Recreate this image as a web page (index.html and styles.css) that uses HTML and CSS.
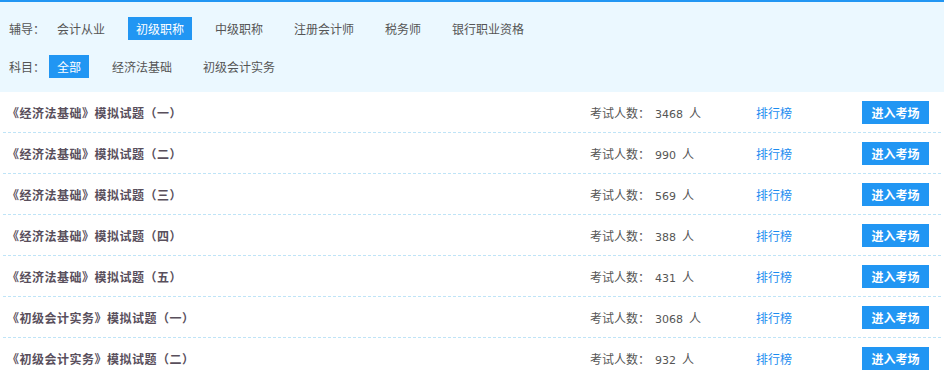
FILE: index.html
```html
<!DOCTYPE html>
<html lang="zh-CN">
<head>
    <meta charset="UTF-8">
    <title>模拟考场</title>
    <link rel="stylesheet" href="styles.css">
</head>
<body>
    <div class="filter">
        <div class="filter-row">
            <span class="filter-label">辅导：</span>
            <a class="filter-item">会计从业</a>
            <a class="filter-item active">初级职称</a>
            <a class="filter-item">中级职称</a>
            <a class="filter-item">注册会计师</a>
            <a class="filter-item">税务师</a>
            <a class="filter-item">银行职业资格</a>
        </div>
        <div class="filter-row">
            <span class="filter-label">科目：</span>
            <a class="filter-item active">全部</a>
            <a class="filter-item">经济法基础</a>
            <a class="filter-item">初级会计实务</a>
        </div>
    </div>

    <ul class="exam-list">
        <li class="exam">
            <span class="exam-title">《经济法基础》模拟试题（一）</span>
            <span class="exam-count">考试人数：<span class="num">3468</span>人</span>
            <a class="exam-rank">排行榜</a>
            <a class="exam-btn">进入考场</a>
        </li>
        <li class="exam">
            <span class="exam-title">《经济法基础》模拟试题（二）</span>
            <span class="exam-count">考试人数：<span class="num">990</span>人</span>
            <a class="exam-rank">排行榜</a>
            <a class="exam-btn">进入考场</a>
        </li>
        <li class="exam">
            <span class="exam-title">《经济法基础》模拟试题（三）</span>
            <span class="exam-count">考试人数：<span class="num">569</span>人</span>
            <a class="exam-rank">排行榜</a>
            <a class="exam-btn">进入考场</a>
        </li>
        <li class="exam">
            <span class="exam-title">《经济法基础》模拟试题（四）</span>
            <span class="exam-count">考试人数：<span class="num">388</span>人</span>
            <a class="exam-rank">排行榜</a>
            <a class="exam-btn">进入考场</a>
        </li>
        <li class="exam">
            <span class="exam-title">《经济法基础》模拟试题（五）</span>
            <span class="exam-count">考试人数：<span class="num">431</span>人</span>
            <a class="exam-rank">排行榜</a>
            <a class="exam-btn">进入考场</a>
        </li>
        <li class="exam">
            <span class="exam-title">《初级会计实务》模拟试题（一）</span>
            <span class="exam-count">考试人数：<span class="num">3068</span>人</span>
            <a class="exam-rank">排行榜</a>
            <a class="exam-btn">进入考场</a>
        </li>
        <li class="exam">
            <span class="exam-title">《初级会计实务》模拟试题（二）</span>
            <span class="exam-count">考试人数：<span class="num">932</span>人</span>
            <a class="exam-rank">排行榜</a>
            <a class="exam-btn">进入考场</a>
        </li>
    </ul>
</body>
</html>
```

FILE: styles.css
```css
body {
    margin: 0;
    font-family: "Noto Sans CJK SC", sans-serif;
    font-size: 12px;
    color: #555;
    background: #fff;
}
a {
    cursor: pointer;
}
.filter {
    border-top: 2px solid #2196f3;
    background-color: #ebf8ff;
    padding: 15px 0 14px 9px;
}
.filter-row {
    display: flex;
    align-items: center;
    height: 23px;
    margin-bottom: 15px;
}
.filter-row:last-child {
    margin-bottom: 0;
}
.filter-label {
    width: 40px;
}
.filter-item {
    padding: 0 8px;
    margin-right: 15px;
    line-height: 23px;
    color: #555;
}
.filter-item.active {
    background-color: #2196f3;
    color: #fff;
}
.exam-list {
    list-style: none;
    margin: 0 3px;
    padding: 0;
}
.exam {
    display: grid;
    grid-template-columns: 1fr 166px 106px 67px;
    align-items: center;
    height: 40px;
    padding: 0 12px 0 4px;
    border-bottom: 1px dashed #bfe4f7;
}
.exam:last-child {
    border-bottom: none;
}
.exam-title {
    font-weight: bold;
    color: #594f5c;
    letter-spacing: 0.5px;
}
.exam-count {
    color: #555;
}
.num {
    font-family: "DejaVu Sans", sans-serif;
    font-size: 11px;
    margin: 0 6px 0 5px;
}
.exam-rank {
    color: #1a8cf0;
}
.exam-btn {
    height: 23px;
    line-height: 23px;
    text-align: center;
    background-color: #2196f3;
    color: #fff;
    font-weight: bold;
}
```
